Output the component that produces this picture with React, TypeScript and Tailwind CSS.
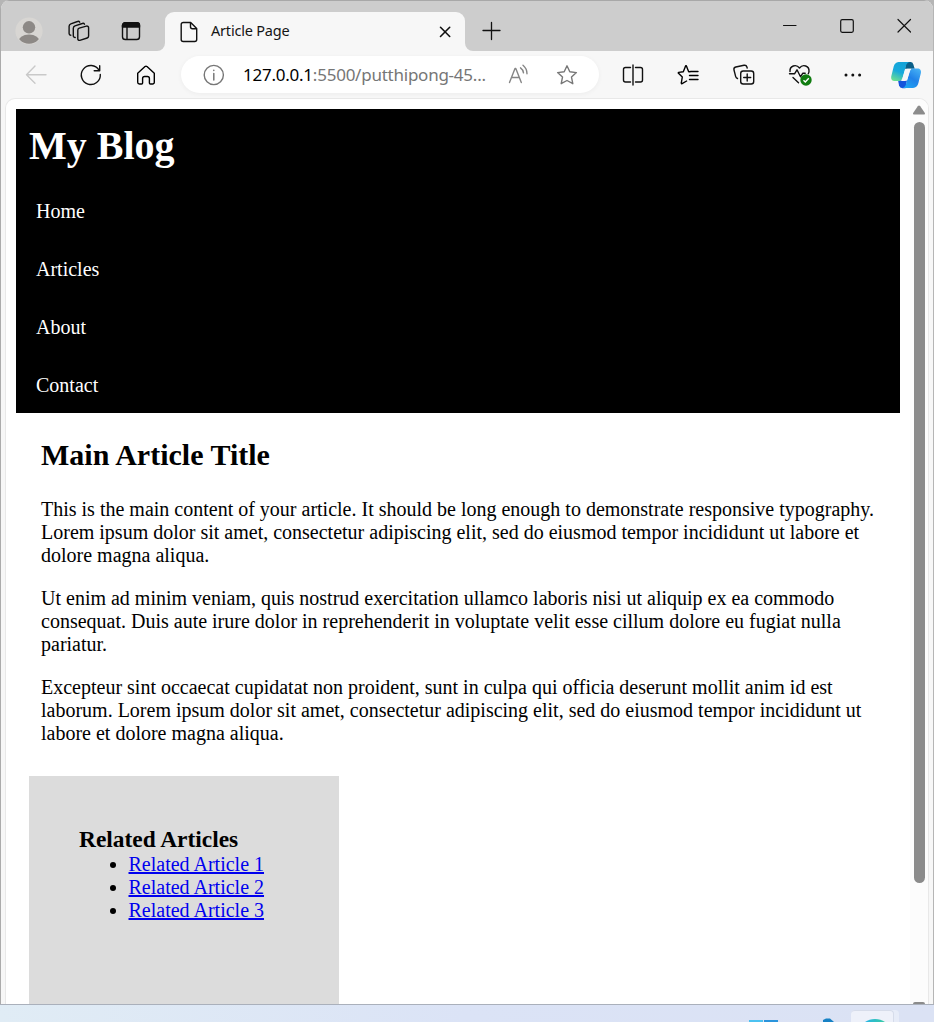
import type { ReactNode } from 'react';

function Icon({ children, className = 'text-[#111]' }: { children: ReactNode; className?: string }) {
  return (
    <svg
      width="24"
      height="24"
      viewBox="0 0 24 24"
      fill="none"
      stroke="currentColor"
      strokeWidth="1.4"
      strokeLinecap="round"
      strokeLinejoin="round"
      className={`shrink-0 ${className}`}
    >
      {children}
    </svg>
  );
}

const STAR = 'M12 2.8l2.8 6 6.6.8-4.9 4.5 1.3 6.6-5.8-3.2-5.8 3.2 1.3-6.6-4.9-4.5 6.6-.8z';

function TabStrip() {
  return (
    <div className="flex h-[51px] shrink-0 bg-[#cdcdcd] border-t border-[#a8a8a8] pt-px">
      <div className="flex w-[56px] justify-center pt-[15px]">
        <svg width="28" height="28" viewBox="0 0 28 28">
          <defs>
            <clipPath id="avatar">
              <circle cx="14" cy="14" r="12.8" />
            </clipPath>
          </defs>
          <circle cx="14" cy="14" r="13.6" fill="#d8d6d3" />
          <g clipPath="url(#avatar)" fill="#8d8986">
            <circle cx="14" cy="10.3" r="6.2" />
            <ellipse cx="14" cy="25.5" rx="11" ry="8" />
          </g>
        </svg>
      </div>
      <div className="flex w-[43px] justify-center pt-[17px]">
        <Icon>
          <path d="M12.2 9.2l7.2-2.1a1.7 1.7 0 0 1 2.2 1.6v8.4a2 2 0 0 1-1.4 1.9l-7.4 2.3a1.5 1.5 0 0 1-2-1.4v-8.6a2.2 2.2 0 0 1 1.4-2.1z" />
          <path d="M8.200 18.500a1.800 1.800 0 0 1-1.900-1.800V9.200a2.600 2.600 0 0 1 1.700-2.300l7.300-2.400a1.800 1.800 0 0 1 2.200.7M3.800 16.200a1.800 1.800 0 0 1-1.700-1.800V7.200a2.600 2.600 0 0 1 1.700-2.400l6.700-2.300a1.800 1.800 0 0 1 2.200.7" />
        </Icon>
      </div>
      <div className="flex w-[61px] justify-center pt-[17px]">
        <Icon>
          <rect x="3.5" y="3.8" width="17" height="16.7" rx="2.8" />
          <path d="M3.5 8V6.3a2.6 2.6 0 0 1 2.6-2.6h11.8a2.6 2.6 0 0 1 2.6 2.6V8z" fill="currentColor" />
          <path d="M8 8v12" />
        </Icon>
      </div>
      <div className="size-2 -ml-1 self-end bg-[#f7f7f7]">
        <div className="size-full rounded-br-lg bg-[#cdcdcd]" />
      </div>
      <div className="mt-[10px] flex w-[300px] rounded-t-[9px] bg-[#f7f7f7]">
        <div className="flex w-[46px] pl-3 pt-[8px]">
          <Icon>
            <path d="M13.7 2.5H6.2a2 2 0 0 0-2 2v15a2 2 0 0 0 2 2h11.5a2 2 0 0 0 2-2V8.5zM13.5 2.5v4.3a2 2 0 0 0 2 2h4" />
          </Icon>
        </div>
        <span className="flex-1 pt-[6px] font-['Noto_Sans',sans-serif] text-[14.5px] leading-[24px] tracking-[-0.2px] text-[#151515]">
          Article Page
        </span>
        <div className="pr-2 pt-2">
          <Icon>
            <path d="M7.5 7.3l9.2 9.2M16.7 7.3l-9.2 9.2" strokeWidth="1.6" />
          </Icon>
        </div>
      </div>
      <div className="size-2 self-end bg-[#f7f7f7]">
        <div className="size-full rounded-bl-lg bg-[#cdcdcd]" />
      </div>
      <div className="w-[37px] pl-[6px] pt-[17px]">
        <Icon>
          <path d="M12.5 3.5v17M4 11.5h17" strokeWidth="1.3" />
        </Icon>
      </div>
      <div className="ml-auto mr-px flex w-[171px] pt-3">
        <div className="flex w-[57px] justify-center">
          <Icon>
            <path d="M5.5 11.5h12.5" strokeWidth="1.1" />
          </Icon>
        </div>
        <div className="flex w-[57px] justify-center">
          <Icon>
            <rect x="5.7" y="5.7" width="12.6" height="12.6" rx="1.5" strokeWidth="1.2" />
          </Icon>
        </div>
        <div className="flex w-[57px] justify-center">
          <Icon>
            <path d="M6 5.5l12.5 12.5M18.5 5.5L6 18" strokeWidth="1.2" />
          </Icon>
        </div>
      </div>
    </div>
  );
}

function ToolButton({ children }: { children: ReactNode }) {
  return <div className="flex w-[55.5px] shrink-0 justify-center">{children}</div>;
}

function Copilot() {
  return (
    <svg width="32" height="30" viewBox="0 0 32 30" className="shrink-0">
      <defs>
        <linearGradient id="cpLeft" x1="0.6" y1="0" x2="0.2" y2="1">
          <stop offset="0" stopColor="#14a3d8" />
          <stop offset="0.5" stopColor="#18aadc" />
          <stop offset="1" stopColor="#6ee08f" />
        </linearGradient>
        <linearGradient id="cpRight" x1="0.8" y1="0" x2="0.2" y2="1">
          <stop offset="0" stopColor="#45b0f4" />
          <stop offset="0.5" stopColor="#2182e8" />
          <stop offset="1" stopColor="#1fa4f4" />
        </linearGradient>
      </defs>
      <path d="M16 2h4.5a3 3 0 0 1 2.8 2.2l1.4 4.5H15z" fill="#0b5f88" />
      <path d="M8 20l9 .5-1.5 7.7h-3A4 4 0 0 1 9 25.500z" fill="#1554dc" />
      <path d="M8.500 2H19.500c-2 .4-3 2-3.600 4l-3.400 12c-.6 2-1.600 3-3.500 3H4.500C2 21 .7 19 1.200 16.500l2.500-10A6 6 0 0 1 8.500 2z" fill="url(#cpLeft)" />
      <path d="M23 28H12.500c2-.4 3-2 3.700-4.500l3.600-12C20.400 9.500 21.400 8.500 23 8.500h4.500c2.500 0 4 2 3.400 4.500L28.400 23a6.500 6.500 0 0 1-5.400 5z" fill="url(#cpRight)" />
      <path d="M17.500 8.700h4c-1.200.6-1.500 1.500-1.900 2.800l-2.200 7.300c-.5 1.600-1.300 2.400-3 2.200h-3.800c1.200-.6 1.600-1.600 2-3l2.200-7.200c.4-1.400 1.200-2.100 2.700-2.100z" fill="#f7f7f7" />
    </svg>
  );
}

function Toolbar() {
  return (
    <div className="flex h-[47px] shrink-0 items-center pl-[7px]">
      <ToolButton>
        <Icon className="text-[#c9c9c9]">
          <path d="M22 11.7H2.5M11 3L2.5 11.7l8.5 8.5" />
        </Icon>
      </ToolButton>
      <ToolButton>
        <Icon>
          <path d="M20 7.2A9.5 9.5 0 1 0 21.3 11.5M20.7 2.8v5h-5.5" />
        </Icon>
      </ToolButton>
      <ToolButton>
        <Icon className="-ml-[2px]">
          <path d="M3.7 10.3L11 3.6a1.5 1.5 0 0 1 2 0l7.3 6.7v9a1.7 1.7 0 0 1-1.7 1.7h-2.2a1 1 0 0 1-1-1v-4.5a2 2 0 0 0-2-2h-2.800a2 2 0 0 0-2 2V20a1 1 0 0 1-1 1H5.400a1.700 1.700 0 0 1-1.700-1.700z" />
        </Icon>
      </ToolButton>
      <div className="ml-[6.5px] h-[37px] flex w-[418px] shrink-0 items-center rounded-full bg-white shadow-[0_1px_5px_#0000000c]">
        <div className="w-[62px] pl-[21px]">
          <Icon className="text-[#777]">
            <circle cx="11.8" cy="12" r="9.6" />
            <path d="M11.8 10.5v6.5M11.8 7.3v.3" strokeWidth="1.5" />
          </Icon>
        </div>
        <span className="w-[264px] whitespace-nowrap font-['Noto_Sans',sans-serif] text-[17px] leading-[24px] tracking-[-0.24px] text-[#767676]">
          <span className="text-black">127.0.0.1</span>:5500/putthipong-45...
        </span>
        <Icon className="text-[#858585]">
          <path d="M2.5 19.5L8 5.5h.8l5.5 14M4.5 14.5h7.8M13.5 4.8a7 7 0 0 1 3 5M16 2.3a11 11 0 0 1 4 8.5" />
        </Icon>
        <Icon className="ml-[24px] text-[#777]">
          <path d={STAR} />
        </Icon>
      </div>
      <div className="ml-[6.5px] flex items-center">
        <ToolButton>
          <Icon>
            <path d="M9.500 4.500h-5a2 2 0 0 0-2 2v10.500a2 2 0 0 0 2 2h5M14.500 4.500h5a2 2 0 0 1 2 2v10.500a2 2 0 0 1-2 2h-5M12 2v20" />
          </Icon>
        </ToolButton>
        <ToolButton>
          <Icon className="ml-px">
            <path d="M12.5 8.8h-.8L9.5 3.3a.5.5 0 0 0-1 0L6.3 8.8l-4.6.6c-.5.1-.6.6-.2.9l3.8 3.7-1 6c-.1.5.4.8.8.6l4.5-2.6M14.5 8.5H21M12.5 12.5H21M12.5 16.5H21M12.5 8.8L14 8.5" />
          </Icon>
        </ToolButton>
        <ToolButton>
          <Icon>
            <rect x="8.7" y="8" width="13" height="13" rx="2.5" />
            <path d="M15.2 11v7M11.7 14.500h7M5.500 15.500a2.500 2.500 0 0 1-1.800-1.800L2 7a2.500 2.500 0 0 1 1.800-3l8.200-1.700a2.500 2.500 0 0 1 2.900 1.700l.3 1" />
          </Icon>
        </ToolButton>
        <ToolButton>
          <svg width="24" height="24" viewBox="0 0 24 24" fill="none" className="overflow-visible">
            <path
              d="M2 8.500C1.500 3 8 .5 11.500 5c3.500-4.500 10-2 9.500 3.500-.1 1-.3 1.500-.7 2.200M1.500 10.800h5l2.500-4 3.500 7 2.200-3.500h2.500M5 14.500l5.500 5.200"
              stroke="#111"
              strokeWidth="1.4"
              strokeLinecap="round"
              strokeLinejoin="round"
            />
            <circle cx="18" cy="17" r="5.7" fill="#107c10" />
            <path d="M15.5 17.3l1.8 1.7 3.5-3.7" stroke="white" strokeWidth="1.4" />
          </svg>
        </ToolButton>
        <div className="flex w-[51px] justify-center">
          <svg width="24" height="24" viewBox="0 0 24 24" fill="#111">
            <circle cx="5" cy="12" r="1.5" />
            <circle cx="11.8" cy="12" r="1.5" />
            <circle cx="18.6" cy="12" r="1.5" />
          </svg>
        </div>
        <div className="ml-[11.5px]">
          <Copilot />
        </div>
      </div>
    </div>
  );
}

const NAV = ['Home', 'Articles', 'About', 'Contact'];
const RELATED = ['Related Article 1', 'Related Article 2', 'Related Article 3'];

function BlogPage() {
  return (
    <div className="flex-1 overflow-hidden pl-[10px] pr-[10px] pt-[10px] font-['Liberation_Serif',serif] text-[20px] leading-[23px] text-black">
      <header className="h-[304px] bg-black px-[13px] pt-[14px] text-white">
        <h1 className="text-[40px] font-bold leading-[46px]">My Blog</h1>
        <nav className="mt-[31px] flex flex-col gap-[35px] pl-[7px]">
          {NAV.map((item) => (
            <a key={item}>{item}</a>
          ))}
        </nav>
      </header>
      <main className="w-[880px] pl-[25px] pt-[25px]">
        <h2 className="text-[30px] font-bold leading-[34px]">Main Article Title</h2>
        <div className="mt-[26px] flex flex-col gap-5 whitespace-nowrap">
          <p>
            This is the main content of your article. It should be long enough to demonstrate responsive typography.
            <br />
            Lorem ipsum dolor sit amet, consectetur adipiscing elit, sed do eiusmod tempor incididunt ut labore et
            <br />
            dolore magna aliqua.
          </p>
          <p>
            Ut enim ad minim veniam, quis nostrud exercitation ullamco laboris nisi ut aliquip ex ea commodo
            <br />
            consequat. Duis aute irure dolor in reprehenderit in voluptate velit esse cillum dolore eu fugiat nulla
            <br />
            pariatur.
          </p>
          <p>
            Excepteur sint occaecat cupidatat non proident, sunt in culpa qui officia deserunt mollit anim id est
            <br />
            laborum. Lorem ipsum dolor sit amet, consectetur adipiscing elit, sed do eiusmod tempor incididunt ut
            <br />
            labore et dolore magna aliqua.
          </p>
        </div>
      </main>
      <aside className="ml-[13px] mt-[31px] h-[300px] w-[310px] bg-[#dcdcdc] px-[50px] pt-[50px]">
        <h3 className="whitespace-nowrap text-[23.4px] font-bold leading-[27px]">Related Articles</h3>
        <ul className="list-disc pl-[49.5px]">
          {RELATED.map((item) => (
            <li key={item}>
              <a className="text-[#0000ee] underline">{item}</a>
            </li>
          ))}
        </ul>
      </aside>
    </div>
  );
}

function Scrollbar() {
  return (
    <div className="flex w-[18px] shrink-0 flex-col items-center bg-[#fcfcfc] pt-[6px]">
      <svg width="14" height="10" viewBox="0 0 14 10" className="shrink-0">
        <path d="M5.8 1.2a1.5 1.5 0 0 1 2.4 0l4.5 6.500c.6 1 .2 1.900-.8 1.900H2.100c-1 0-1.400-.9-.8-1.900z" fill="#8b8b8b" />
      </svg>
      <div className="mt-[7px] h-[761px] w-[11px] shrink-0 rounded-full bg-[#8b8b8b]" />
      <div className="mt-auto h-[2px] w-3 shrink-0 rounded-t bg-[#8b8b8b]" />
    </div>
  );
}

function Taskbar() {
  return (
    <div className="flex h-[18px] shrink-0 items-end overflow-hidden border-t border-[#aab0bb] bg-linear-to-r from-[#e0ecf5] via-[#dbe3f6] to-[#dbe2f4]">
      <div className="ml-[749px] flex gap-px">
        <div className="h-[2px] w-[14px] bg-[#4cc2f1]" />
        <div className="h-[2px] w-[14px] bg-[#2a94dc]" />
      </div>
      <svg width="12" height="4" viewBox="0 0 12 4" className="ml-[44px]">
        <path d="M1 4V2l3-1.5h4L12 4z" fill="#1681c4" />
      </svg>
      <div className="ml-[17px] flex h-[12px] w-[48px] rounded-t-[4px] bg-[#e7ecf8]">
        <div className="flex w-[43px] items-end justify-center rounded-t-[4px] border-r border-t border-[#d6dcea] bg-[#eef1fa]">
          <svg width="20" height="3" viewBox="0 0 20 3" className="ml-[6px]">
            <defs>
              <linearGradient id="edge">
                <stop stopColor="#27b4e4" />
                <stop offset="1" stopColor="#38cba3" />
              </linearGradient>
            </defs>
            <path d="M0 3C3 1 6 0 10 0s7 1 10 3z" fill="url(#edge)" />
          </svg>
        </div>
      </div>
    </div>
  );
}

export default function App() {
  return (
    <div className="flex h-[1022px] w-[934px] flex-col overflow-hidden bg-[#b5b5b5]">
      <div className="flex h-[1004px] w-[933px] shrink-0 flex-col overflow-hidden rounded-t-[9px] border-l border-[#ababab] bg-[#f7f7f7]">
        <TabStrip />
        <Toolbar />
        <div className="ml-1 mr-1 flex min-h-0 flex-1 overflow-hidden rounded-t-[10px] border border-b-0 border-[#e8e8e8] bg-white">
          <BlogPage />
          <Scrollbar />
        </div>
      </div>
      <Taskbar />
    </div>
  );
}
